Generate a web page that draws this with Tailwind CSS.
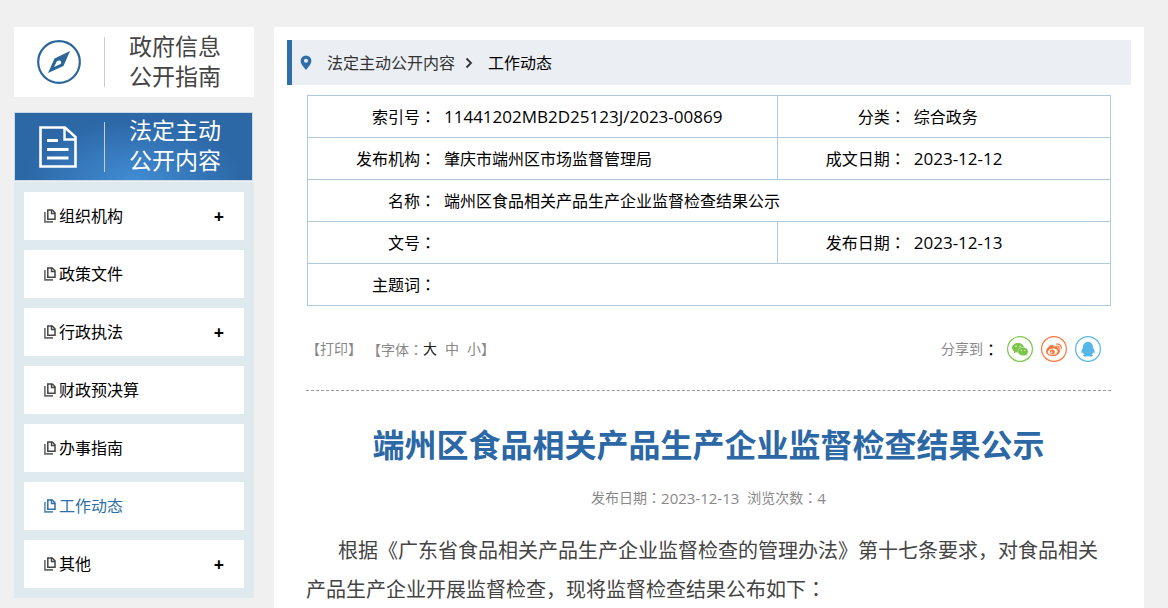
<!DOCTYPE html>
<html lang="zh-CN">
<head>
<meta charset="utf-8">
<meta name="viewport" content="width=device-width, initial-scale=1">
<title>端州区食品相关产品生产企业监督检查结果公示</title>
<script src="https://cdn.jsdelivr.net/npm/@tailwindcss/browser@4"></script>
</head>
<body class="bg-[#f0f0f0] font-['Open_Sans','Noto_Sans_CJK_SC',sans-serif] text-base text-black">
<svg class="hidden" aria-hidden="true">
  <symbol id="docs" viewBox="0 0 12 14">
    <path d="M3.8 1h4.4L11 3.8V10.300H3.800Z" fill="none" stroke="currentColor" stroke-width="1.500"/>
    <path d="M7.500 1v3.500H11" fill="none" stroke="currentColor" stroke-width="1.400"/>
    <path d="M0.900 3v9.900H9" fill="none" stroke="currentColor" stroke-width="1.600" opacity=".8"/>
  </symbol>
</svg>
<div class="flex min-h-screen gap-5 pt-[27px] pr-6 pl-[14px]">

  <aside class="w-60 shrink-0 self-start">
    <a href="#" class="flex h-[70px] items-center bg-white text-[#444]">
      <span class="flex w-[90px] justify-center">
        <svg class="h-11 w-11" viewBox="0 0 44 44" fill="none">
          <circle cx="22" cy="22" r="20.800" stroke="#2c6699" stroke-width="2.200"/>
          <path d="M33 11 26.500 26 11 33 17.500 18.500Z" fill="#2c6699"/>
          <path d="M22 20.500a2 2 0 0 1 1.500 3.500L17 27l3-6Z" fill="#fff"/>
        </svg>
      </span>
      <span class="h-[50px] w-px bg-[#ccc]"></span>
      <span class="ml-6 pb-[3px] text-[23px] leading-[30px]">政府信息<br>公开指南</span>
    </a>
    <a href="#" class="mt-[15px] mr-px flex h-[69px] items-center border border-[#c8d9e8] bg-[#2c67a6] bg-[radial-gradient(ellipse_110px_60px_at_50%_100%,#418cd3,#2c67a6)] text-white">
      <span class="flex w-[89px] justify-center pr-[3px]">
        <svg class="h-[42px] w-[38px]" viewBox="0 0 38 42" fill="none" stroke="#fff">
          <path d="M1.500 1.500H26L36.500 11V40.500H1.500Z" stroke-width="2.600"/>
          <path d="M25.500 2v11.500H36" stroke-width="2.400"/>
          <path d="M8 14.500h11M8 23.500h21.500M8 32h21.500" stroke-width="2.800"/>
        </svg>
      </span>
      <span class="h-[50px] w-px bg-[#ccc]"></span>
      <span class="ml-6 pb-[3px] text-[23px] leading-[30px]">法定主动<br>公开内容</span>
    </a>
    <nav class="mt-px">
      <ul class="flex flex-col gap-2.5 bg-[#dfeaef] p-2.5">
        <li class="flex h-12 items-center justify-between bg-white px-5"><a href="#" class="flex items-center gap-[3px]"><svg class="h-3.5 w-3 text-[#444]"><use href="#docs"/></svg>组织机构</a><button type="button" aria-label="展开组织机构" class="text-lg leading-none font-bold">+</button></li>
        <li class="flex h-12 items-center justify-between bg-white px-5"><a href="#" class="flex items-center gap-[3px]"><svg class="h-3.5 w-3 text-[#444]"><use href="#docs"/></svg>政策文件</a></li>
        <li class="flex h-12 items-center justify-between bg-white px-5"><a href="#" class="flex items-center gap-[3px]"><svg class="h-3.5 w-3 text-[#444]"><use href="#docs"/></svg>行政执法</a><button type="button" aria-label="展开行政执法" class="text-lg leading-none font-bold">+</button></li>
        <li class="flex h-12 items-center justify-between bg-white px-5"><a href="#" class="flex items-center gap-[3px]"><svg class="h-3.5 w-3 text-[#444]"><use href="#docs"/></svg>财政预决算</a></li>
        <li class="flex h-12 items-center justify-between bg-white px-5"><a href="#" class="flex items-center gap-[3px]"><svg class="h-3.5 w-3 text-[#444]"><use href="#docs"/></svg>办事指南</a></li>
        <li class="flex h-12 items-center justify-between bg-white px-5"><a href="#" aria-current="page" class="flex items-center gap-[3px] text-[#2f6fa7]"><svg class="h-3.5 w-3"><use href="#docs"/></svg>工作动态</a></li>
        <li class="flex h-12 items-center justify-between bg-white px-5"><a href="#" class="flex items-center gap-[3px]"><svg class="h-3.5 w-3 text-[#444]"><use href="#docs"/></svg>其他</a><button type="button" aria-label="展开其他" class="text-lg leading-none font-bold">+</button></li>
      </ul>
    </nav>
  </aside>

  <main class="min-w-0 flex-1 bg-white pt-[13px]">
    <nav class="mx-[13px] flex h-[45px] items-center border-l-[5px] border-[#2f6fa7] bg-[#ebeff3] pl-2">
      <svg class="h-4 w-3" viewBox="0 0 12 16"><path fill="#2f6fa7" fill-rule="evenodd" d="M6 0.500a5.400 5.400 0 0 1 5.400 5.400C11.400 9 8.500 12 6 15 3.500 12 .6 9 .6 5.900A5.400 5.400 0 0 1 6 .5Zm0 3.300a2 2 0 1 0 0 4 2 2 0 0 0 0-4Z"/></svg>
      <a href="#" class="ml-[15px] text-[#333]">法定主动公开内容</a>
      <svg class="ml-2.5 h-3 w-2" viewBox="0 0 8 12" fill="none" stroke="#333" stroke-width="1.800"><path d="M1.500 1.500 6 6 1.500 10.500"/></svg>
      <a href="#" class="ml-[15px]">工作动态</a>
    </nav>

    <div class="mr-[33px] ml-8">
      <div class="pt-2.5 pl-px">
      <table class="w-full table-fixed border-collapse border border-[#afc9df] [&_td]:pl-2 [&_th]:text-right [&_th]:font-normal [&_th]:whitespace-nowrap [&_tr]:h-[42px] [&_tr]:border-b [&_tr]:border-[#afc9df]">
        <colgroup><col class="w-[16%]"><col><col class="w-[16%]"><col class="w-[25.500%]"></colgroup>
        <tbody>
          <tr><th scope="row">索引号<span lang="zh-TW" class="font-['Noto_Sans_CJK_TC',sans-serif]">：</span></th><td class="border-r border-[#afc9df] text-[17px]">11441202MB2D25123J/2023-00869</td><th scope="row">分类<span lang="zh-TW" class="font-['Noto_Sans_CJK_TC',sans-serif]">：</span></th><td>综合政务</td></tr>
          <tr><th scope="row">发布机构<span lang="zh-TW" class="font-['Noto_Sans_CJK_TC',sans-serif]">：</span></th><td class="border-r border-[#afc9df]">肇庆市端州区市场监督管理局</td><th scope="row">成文日期<span lang="zh-TW" class="font-['Noto_Sans_CJK_TC',sans-serif]">：</span></th><td class="text-[17px]">2023-12-12</td></tr>
          <tr><th scope="row">名称<span lang="zh-TW" class="font-['Noto_Sans_CJK_TC',sans-serif]">：</span></th><td colspan="3">端州区食品相关产品生产企业监督检查结果公示</td></tr>
          <tr><th scope="row">文号<span lang="zh-TW" class="font-['Noto_Sans_CJK_TC',sans-serif]">：</span></th><td class="border-r border-[#afc9df]"></td><th scope="row">发布日期<span lang="zh-TW" class="font-['Noto_Sans_CJK_TC',sans-serif]">：</span></th><td class="text-[17px]">2023-12-13</td></tr>
          <tr><th scope="row">主题词<span lang="zh-TW" class="font-['Noto_Sans_CJK_TC',sans-serif]">：</span></th><td colspan="3"></td></tr>
        </tbody>
      </table>
      </div>

      <div class="flex h-[85px] items-center justify-between border-b border-dashed border-[#999] pt-0.5 text-sm text-[#888]">
        <div class="flex">
          <button type="button">【打印】</button>
          <span class="ml-[5px]">【字体<span lang="zh-TW" class="font-['Noto_Sans_CJK_TC',sans-serif]">：</span></span>
          <button type="button" class="text-[#222]">大</button>
          <button type="button" class="ml-2">中</button>
          <button type="button" class="ml-2">小</button><span>】</span>
        </div>
        <div class="mr-2.5 flex items-center gap-2">
          <span class="flex items-center">分享到<span lang="zh-TW" class="font-['Noto_Sans_CJK_TC',sans-serif] text-base text-black">：</span></span>
          <a href="#" aria-label="微信"><svg class="h-[26px] w-[26px]" viewBox="0 0 26 26"><circle cx="13" cy="13" r="12.400" fill="#fff" stroke="#7bc549" stroke-width="1.200"/><path fill="#7bc549" d="M11 7C7.700 7 5 9.100 5 11.800c0 1.500.9 2.800 2.200 3.700l-.5 1.900 2.200-1.100c.7.2 1.400.3 2.100.3 3.400 0 6-2.100 6-4.800S14.400 7 11 7Z"/><path fill="#7bc549" stroke="#fff" stroke-width=".4" d="M16 11.300c2.900 0 5.200 1.900 5.200 4.200 0 1.300-.7 2.400-1.700 3.200l.4 1.600-1.900-.9c-.6.2-1.300.3-2 .3-2.900 0-5.200-1.900-5.200-4.200s2.300-4.200 5.200-4.200Z"/><g fill="#fff"><circle cx="9" cy="10.300" r=".7"/><circle cx="13" cy="10.300" r=".7"/><circle cx="14.300" cy="14.300" r=".6"/><circle cx="17.800" cy="14.300" r=".6"/></g></svg></a>
          <a href="#" aria-label="微博"><svg class="h-[26px] w-[26px]" viewBox="0 0 26 26"><circle cx="13" cy="13" r="12.400" fill="#fff" stroke="#ff763b" stroke-width="1.200"/><path fill="#ff763b" d="M10.500 8.800c1.500-.5 2.300.3 1.900 1.900 2.300-.9 4.300-.6 3.900 1.400 1.500.5 2.700 1.300 2.700 2.900 0 2.700-3.500 5.200-7.300 5.200-3.600 0-6.600-1.800-6.600-4.600 0-2.500 2.800-5.900 5.400-6.800Z"/><ellipse cx="11.700" cy="15.700" rx="4.900" ry="3.200" fill="#fff" transform="rotate(-8 11.700 15.700)"/><circle cx="11.300" cy="15.900" r="2.500" fill="#ff763b"/><circle cx="10.500" cy="16.400" r=".9" fill="#fff"/><path d="M15.500 8.200c3-.7 5.400 1.700 4.700 4.600M15.900 10.300c1.500-.2 2.500.7 2.200 2.200" fill="none" stroke="#ff763b" stroke-width="1.200" stroke-linecap="round"/></svg></a>
          <a href="#" aria-label="QQ"><svg class="h-[26px] w-[26px]" viewBox="0 0 26 26"><circle cx="13" cy="13" r="12.400" fill="#fff" stroke="#56b6e7" stroke-width="1.200"/><path fill="#56b6e7" d="M13 6c3.100 0 5 2.100 5 5 0 .6.100 1 .5 1.600.8 1.300 1.400 2.800 1.100 4-.2.800-.9.500-1.500-.4-.2.900-.6 1.600-1.200 2.200.8.400 1.200.8 1.100 1.300-.2 1-3.800 1-5 .2-1.200.8-4.800.8-5-.2-.1-.5.300-.9 1.100-1.300-.6-.6-1-1.300-1.200-2.200-.6.900-1.300 1.200-1.500.4-.3-1.200.3-2.700 1.100-4 .4-.6.500-1 .5-1.600 0-2.900 1.900-5 5-5Z"/></svg></a>
        </div>
      </div>

      <article>
        <h1 class="mt-[30px] text-center text-[32px] leading-[48px] font-bold text-[#2c67a6]">端州区食品相关产品生产企业监督检查结果公示</h1>
        <p class="mt-4 flex items-center justify-center text-sm leading-6 text-[#888]"><span>发布日期<span lang="zh-TW" class="font-['Noto_Sans_CJK_TC',sans-serif]">：</span></span><span class="text-[15px]">2023-12-13</span><span class="ml-2">浏览次数<span lang="zh-TW" class="font-['Noto_Sans_CJK_TC',sans-serif]">：</span></span><span class="text-[15px]">4</span></p>
        <p class="mt-[22px] indent-8 text-xl leading-[38px] text-[#444]">根据《广东省食品相关产品生产企业监督检查的管理办法》第十七条要求，对食品相关产品生产企业开展监督检查，现将监督检查结果公布如下<span lang="zh-TW" class="font-['Noto_Sans_CJK_TC',sans-serif]">：</span></p>
      </article>
    </div>
  </main>
</div>
</body>
</html>
